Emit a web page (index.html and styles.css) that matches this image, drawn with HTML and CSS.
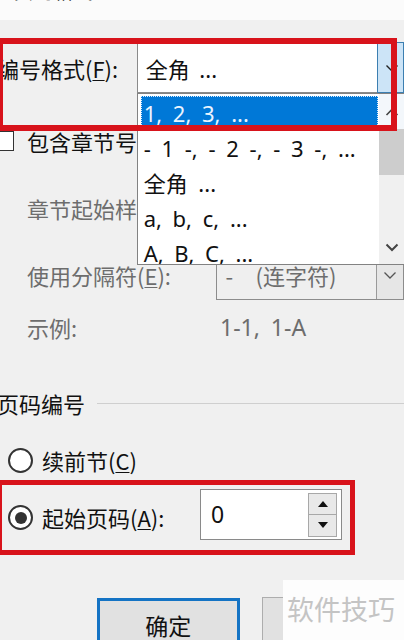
FILE: index.html
```html
<!DOCTYPE html>
<html lang="zh-CN">
<head>
<meta charset="utf-8">
<title>页码格式</title>
<link rel="stylesheet" href="styles.css">
</head>
<body>
<div class="dialog">
  <div class="titlebar"><span class="title">页码格式</span></div>
  <div class="content">
    <div class="row row-format">
      <span class="label-format">编号格式(<u>F</u>):</span>
      <div class="combo">
        <div class="combo-value">全角 ...</div>
        <div class="combo-btn active">
          <svg width="14" height="10" viewBox="0 0 14 10"><path d="M1.5 2.5 L7 8 L12.5 2.5" fill="none" stroke="#222" stroke-width="1.4"/></svg>
        </div>
        <div class="listbox">
          <div class="list-items">
            <div class="item selected">1, 2, 3, ...</div>
            <div class="item">- 1 -, - 2 -, - 3 -, ...</div>
            <div class="item">全角 ...</div>
            <div class="item">a, b, c, ...</div>
            <div class="item">A, B, C, ...</div>
          </div>
          <div class="scrollbar">
            <div class="sb-arrow">
              <svg width="14" height="10" viewBox="0 0 14 10"><path d="M1.5 8 L7 2.5 L12.5 8" fill="none" stroke="#444" stroke-width="1.6"/></svg>
            </div>
            <div class="sb-thumb"></div>
            <div class="sb-track"></div>
            <div class="sb-arrow">
              <svg width="14" height="10" viewBox="0 0 14 10"><path d="M1.5 2.5 L7 8 L12.5 2.5" fill="none" stroke="#444" stroke-width="2"/></svg>
            </div>
          </div>
        </div>
      </div>
    </div>

    <div class="row row-check">
      <span class="checkbox"></span>
      <span class="check-label">包含章节号(<u>N</u>)</span>
    </div>

    <div class="row row-style">
      <span class="indent-label disabled">章节起始样式(<u>P</u>):</span>
    </div>

    <div class="row row-sep">
      <span class="sep-label disabled">使用分隔符(<u>E</u>):</span>
      <div class="combo-disabled">
        <div class="cd-value"><span class="dash">-</span>(连字符)</div>
        <div class="cd-btn">
          <svg width="14" height="10" viewBox="0 0 14 10"><path d="M1.5 2.5 L7 8 L12.5 2.5" fill="none" stroke="#555" stroke-width="1.3"/></svg>
        </div>
      </div>
    </div>

    <div class="row row-example">
      <span class="ex-label disabled">示例:</span>
      <span class="ex-value disabled">1-1, 1-A</span>
    </div>

    <div class="row row-section">
      <span class="section-title">页码编号</span>
      <span class="section-line"></span>
    </div>

    <div class="row row-radio1">
      <span class="radio"></span>
      <span class="radio-label">续前节(<u>C</u>)</span>
    </div>

    <div class="row row-radio2">
      <span class="radio checked"></span>
      <span class="radio-label start-label">起始页码(<u>A</u>):</span>
      <div class="spin">
        <span class="spin-value">0</span>
        <div class="spin-btns">
          <div class="spin-btn">
            <svg width="10" height="6" viewBox="0 0 10 6"><path d="M0 6 L5 0 L10 6 Z" fill="#111"/></svg>
          </div>
          <div class="spin-btn">
            <svg width="10" height="6" viewBox="0 0 10 6"><path d="M0 0 L5 6 L10 0 Z" fill="#111"/></svg>
          </div>
        </div>
      </div>
    </div>

    <div class="row row-buttons">
      <div class="btn btn-default">确定</div>
      <div class="btn btn-cancel">取消</div>
    </div>
  </div>

  <div class="redbox redbox-top"></div>
  <div class="redbox redbox-bottom"></div>
  <div class="watermark">软件技巧</div>
</div>
</body>
</html>
```

FILE: styles.css
```css
* { box-sizing: border-box; }
html, body { margin: 0; padding: 0; }
body {
  width: 404px;
  height: 640px;
  overflow: hidden;
  background: #f0f0f0;
  font-family: "Noto Sans", "Noto Sans CJK SC", sans-serif;
  font-size: 22px;
  color: #111;
}
u { text-underline-offset: 2px; text-decoration-thickness: 1px; }

.dialog { position: relative; width: 404px; height: 640px; overflow: hidden; }

.titlebar {
  height: 20px;
  background: #fbfbfb;
  overflow: hidden;
  padding-left: 14px;
}
.title {
  display: block;
  font-family: "Noto Sans CJK SC", sans-serif;
  font-size: 19px;
  line-height: 20px;
  margin-top: -19px;
  letter-spacing: 1px;
}

.content { padding-top: 22px; }
.row { display: flex; align-items: center; white-space: nowrap; }

/* number format row */
.row-format { height: 51px; }
.label-format { width: 141px; margin-left: -3px; font-family: "Noto Sans CJK SC", sans-serif; }
.combo {
  position: relative;
  display: flex;
  height: 51px;
  width: 270px;
}
.combo-value {
  width: 240px;
  height: 100%;
  background: #fff;
  border: 1px solid #8a8a8a;
  border-right: none;
  padding-left: 8px;
  display: flex;
  align-items: center;
  word-spacing: 4px;
}
.combo-btn {
  flex: 1;
  height: 100%;
  display: flex;
  align-items: center;
  padding-left: 7px;
}
.combo-btn.active {
  background: #cce4f7;
  border: 1px solid #3c7fb1;
}

.listbox {
  position: absolute;
  top: 51px;
  left: 0;
  width: 270px;
  height: 172px;
  background: #fff;
  border: 1px solid #828282;
  display: flex;
  z-index: 5;
}
.list-items {
  width: 241px;
  padding: 2px 1px 0 3px;
  overflow: hidden;
}
.item {
  height: 35px;
  line-height: 33px;
  padding-left: 2px;
  border: 1px solid transparent;
  word-spacing: 5px;
}
.item.selected {
  background: #0078d7;
  color: #eaf4ff;
  border: 1px dotted #d8ecff;
}
.scrollbar {
  flex: 1;
  display: flex;
  flex-direction: column;
  background: #f0f0f0;
}
.sb-arrow {
  height: 35px;
  display: flex;
  align-items: center;
  padding-left: 6px;
  background: #f3f7fb;
}
.sb-arrow:last-child { background: #f0f0f0; }
.sb-thumb { height: 46px; background: #cdcdcd; }
.sb-track { flex: 1; }

/* include chapter number */
.row-check { height: 30px; margin-top: 33px; }
.checkbox {
  width: 20px;
  height: 20px;
  margin-left: -6px;
  border: 1px solid #333;
  background: #fff;
}
.check-label { margin-left: 13px; font-family: "Noto Sans CJK SC", sans-serif; }

.disabled { color: #6d6d6d; }

.row-style { height: 30px; margin-top: 37px; }
.indent-label { margin-left: 27px; font-family: "Noto Sans CJK SC", sans-serif; }

.row-sep { height: 50px; margin-top: 27px; }
.sep-label { width: 219px; padding-left: 27px; font-family: "Noto Sans CJK SC", sans-serif; }
.combo-disabled {
  display: flex;
  height: 50px;
  width: 190px;
  border: 1px solid #8c8c8c;
  background: #efefef;
}
.cd-value {
  width: 160px;
  display: flex;
  align-items: center;
  padding-left: 8px;
  color: #6d6d6d;
  font-family: "Noto Sans CJK SC", sans-serif;
  border-right: 1px solid #9a9a9a;
}
.dash { width: 30px; }
.cd-btn {
  flex: 1;
  display: flex;
  align-items: center;
  padding-left: 6px;
  background: #e6e6e6;
}

.row-example { height: 30px; margin-top: 12px; }
.ex-label { width: 220px; padding-left: 27px; font-family: "Noto Sans CJK SC", sans-serif; }
.ex-value { font-size: 23px; word-spacing: 5px; }

/* section */
.row-section { height: 30px; margin-top: 46px; }
.section-title { margin-left: -3px; font-family: "Noto Sans CJK SC", sans-serif; }
.section-line { flex: 1; height: 1px; background: #cfcfcf; margin-left: 12px; }

.row-radio1 { height: 30px; margin-top: 27px; }
.radio {
  position: relative;
  width: 25px;
  height: 25px;
  margin-left: 8px;
  border: 2px solid #333;
  border-radius: 50%;
  background: #fff;
  flex: none;
}
.radio.checked::after {
  content: "";
  position: absolute;
  left: 4.5px;
  top: 4.5px;
  width: 12px;
  height: 12px;
  border-radius: 50%;
  background: #333;
}
.radio-label { margin-left: 9px; font-family: "Noto Sans CJK SC", sans-serif; }

.row-radio2 { height: 51px; margin-top: 14px; }
.row-radio2 .radio { margin-top: 6px; }
.start-label { width: 158px; margin-top: 4px; }
.spin {
  display: flex;
  align-items: center;
  width: 142px;
  height: 51px;
  background: #fff;
  border: 1px solid #8a8a8a;
}
.spin-value { flex: 1; padding-left: 10px; font-size: 23px; margin-top: -2px; }
.spin-btns {
  width: 29px;
  height: 44px;
  margin-right: 4px;
  display: flex;
  flex-direction: column;
  border: 1px solid #a8a8a8;
}
.spin-btn {
  flex: 1;
  display: flex;
  align-items: center;
  justify-content: center;
  background: #e9e9e9;
}
.spin-btn + .spin-btn { border-top: 1px solid #a8a8a8; }

/* buttons */
.row-buttons { height: 50px; margin-top: 58px; align-items: flex-start; }
.btn {
  height: 50px;
  display: flex;
  align-items: center;
  justify-content: center;
  background: #e1e1e1;
  font-family: "Noto Sans CJK SC", sans-serif;
  font-size: 23px;
  padding-top: 4px;
}
.btn-default {
  width: 146px;
  margin-left: 97px;
  border: 3px solid #1473c4;
}
.btn-cancel {
  width: 146px;
  margin-left: 22px;
  border: 1px solid #adadad;
  margin-top: -1px;
}

/* annotations */
.redbox {
  position: absolute;
  border: 6px solid #d8131b;
  z-index: 10;
}
.redbox-top { left: -3px; top: 38px; width: 400px; height: 93px; }
.redbox-bottom { left: -3px; top: 480px; width: 358px; height: 75px; border-width: 5px; }

.watermark {
  position: absolute;
  left: 283px;
  top: 580px;
  width: 121px;
  height: 60px;
  background: #fdfdfd;
  color: #c4c4c4;
  font-family: "Noto Sans CJK SC", sans-serif;
  font-size: 27px;
  line-height: 58px;
  padding-left: 4px;
  z-index: 10;
}
```
